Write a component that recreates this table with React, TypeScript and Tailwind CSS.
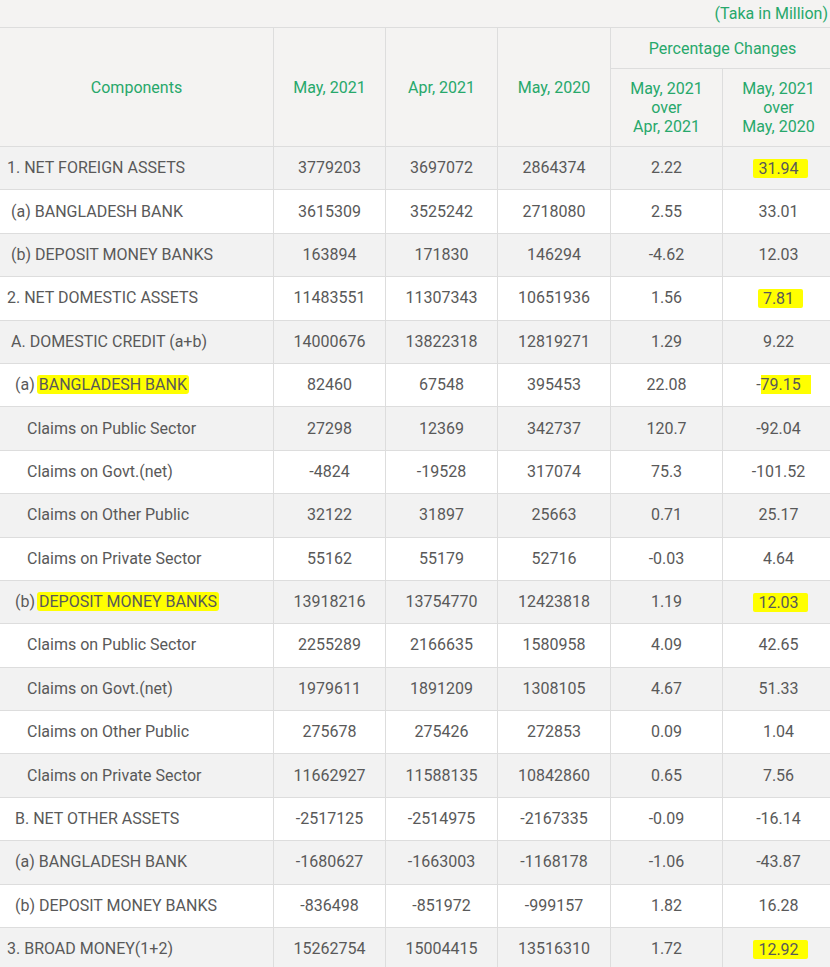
import React from "react";

type Row = {
  label: string;
  mark?: string;
  level: number;
  vals: string[];
  hl?: "full" | "tail";
};

const rows: Row[] = [
  { label: "1. NET FOREIGN ASSETS", level: 0, vals: ["3779203", "3697072", "2864374", "2.22", "31.94"], hl: "full" },
  { label: "(a) BANGLADESH BANK", level: 1, vals: ["3615309", "3525242", "2718080", "2.55", "33.01"] },
  { label: "(b) DEPOSIT MONEY BANKS", level: 1, vals: ["163894", "171830", "146294", "-4.62", "12.03"] },
  { label: "2. NET DOMESTIC ASSETS", level: 0, vals: ["11483551", "11307343", "10651936", "1.56", "7.81"], hl: "full" },
  { label: "A. DOMESTIC CREDIT (a+b)", level: 1, vals: ["14000676", "13822318", "12819271", "1.29", "9.22"] },
  { label: "(a) ", mark: "BANGLADESH BANK", level: 2, vals: ["82460", "67548", "395453", "22.08", "-79.15"], hl: "tail" },
  { label: "Claims on Public Sector", level: 3, vals: ["27298", "12369", "342737", "120.7", "-92.04"] },
  { label: "Claims on Govt.(net)", level: 3, vals: ["-4824", "-19528", "317074", "75.3", "-101.52"] },
  { label: "Claims on Other Public", level: 3, vals: ["32122", "31897", "25663", "0.71", "25.17"] },
  { label: "Claims on Private Sector", level: 3, vals: ["55162", "55179", "52716", "-0.03", "4.64"] },
  { label: "(b) ", mark: "DEPOSIT MONEY BANKS", level: 2, vals: ["13918216", "13754770", "12423818", "1.19", "12.03"], hl: "full" },
  { label: "Claims on Public Sector", level: 3, vals: ["2255289", "2166635", "1580958", "4.09", "42.65"] },
  { label: "Claims on Govt.(net)", level: 3, vals: ["1979611", "1891209", "1308105", "4.67", "51.33"] },
  { label: "Claims on Other Public", level: 3, vals: ["275678", "275426", "272853", "0.09", "1.04"] },
  { label: "Claims on Private Sector", level: 3, vals: ["11662927", "11588135", "10842860", "0.65", "7.56"] },
  { label: "B. NET OTHER ASSETS", level: 2, vals: ["-2517125", "-2514975", "-2167335", "-0.09", "-16.14"] },
  { label: "(a) BANGLADESH BANK", level: 2, vals: ["-1680627", "-1663003", "-1168178", "-1.06", "-43.87"] },
  { label: "(b) DEPOSIT MONEY BANKS", level: 2, vals: ["-836498", "-851972", "-999157", "1.82", "16.28"] },
  { label: "3. BROAD MONEY(1+2)", level: 0, vals: ["15262754", "15004415", "13516310", "1.72", "12.92"], hl: "full" },
];

const indent = ["pl-[7px]", "pl-[11px]", "pl-[15px]", "pl-[27px]"];
const cols = "grid grid-cols-[274px_112px_112px_113px_112px_112px]";
const cell = "border-r border-b border-[#dddddd] flex items-center justify-center";

function LastValue({ row }: { row: Row }) {
  const v = row.vals[4];
  if (row.hl === "full")
    return (
      <span className="bg-[#ffff00] pl-[5px] pr-[9px] -mr-[4px] rounded-[2px] leading-[19px]">{v}</span>
    );
  if (row.hl === "tail")
    return (
      <span>
        {v[0]}
        <span className="bg-[#ffff00] pr-[10px] -mr-[10px] leading-[19px]">{v.slice(1)}</span>
      </span>
    );
  return <span>{v}</span>;
}

export default function App() {
  return (
    <div className="w-[830px] overflow-hidden bg-white text-[16px] text-[#595959] font-['Roboto',sans-serif]">
      <div className="w-[835px]">
        <div className="h-[28px] bg-[#f4f3f2] border-b border-[#dddddd] flex items-center justify-end pr-[7px] text-[#27a86b]">
          (Taka in Million)
        </div>
        <div className={`${cols} grid-rows-[41px_78px] bg-[#f4f3f2] text-[#27a86b] leading-[19px] text-center`}>
          <div className={`${cell} row-span-2`}>Components</div>
          <div className={`${cell} row-span-2`}>May, 2021</div>
          <div className={`${cell} row-span-2`}>Apr, 2021</div>
          <div className={`${cell} row-span-2`}>May, 2020</div>
          <div className={`${cell} col-span-2`}>Percentage Changes</div>
          <div className={cell}>
            May, 2021
            <br />
            over
            <br />
            Apr, 2021
          </div>
          <div className={cell}>
            May, 2021
            <br />
            over
            <br />
            May, 2020
          </div>
        </div>
        {rows.map((row, i) => (
          <div
            key={i}
            className={`${cols} h-[43.4px] ${i % 2 === 0 ? "bg-[#f2f2f2]" : "bg-white"}`}
          >
            <div className={`border-r border-b border-[#dddddd] flex items-center ${indent[row.level]}`}>
              <span className="whitespace-pre">
                {row.label}
                {row.mark && (
                  <span className="bg-[#ffff00] -ml-[2px] pl-[2px] pr-[2px] rounded-[3px] leading-[18px]">
                    {row.mark}
                  </span>
                )}
              </span>
            </div>
            {row.vals.slice(0, 4).map((v, j) => (
              <div key={j} className={cell}>
                {v}
              </div>
            ))}
            <div className={cell}>
              <LastValue row={row} />
            </div>
          </div>
        ))}
      </div>
    </div>
  );
}
